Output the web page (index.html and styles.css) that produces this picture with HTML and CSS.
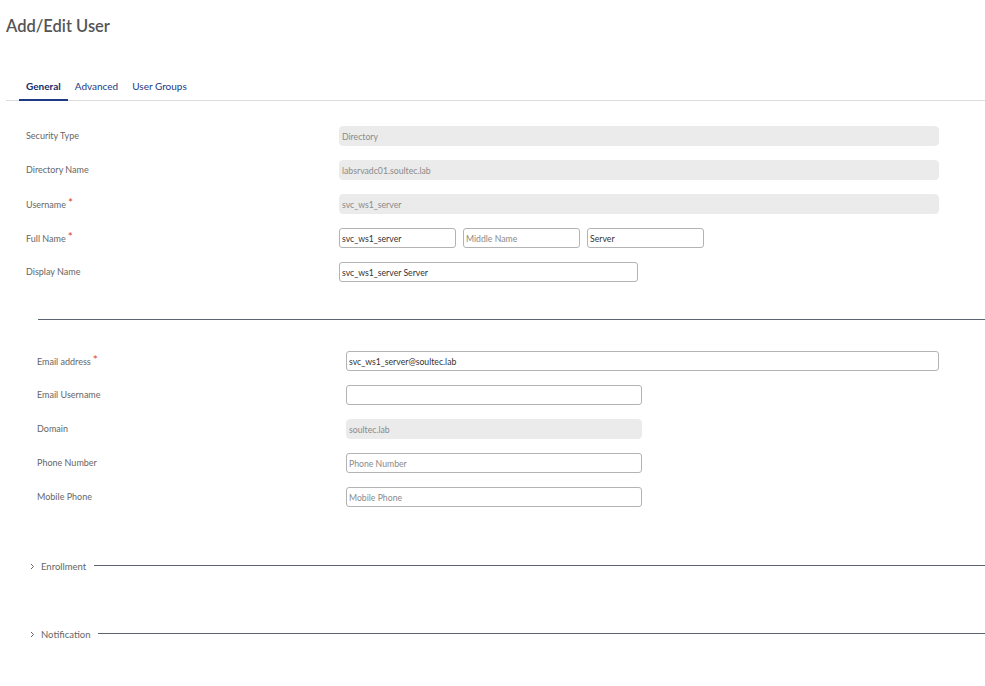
FILE: index.html
```html
<!DOCTYPE html>
<html lang="en">
<head>
    <meta charset="UTF-8">
    <title>Add/Edit User</title>
    <link rel="stylesheet" href="styles.css">
</head>
<body>
    <h1 class="titulo">Add/Edit User</h1>

    <!-- abas -->
    <div class="abas">
        <span class="aba ativa">General</span>
        <span class="aba">Advanced</span>
        <span class="aba">User Groups</span>
    </div>

    <!-- dados principais -->
    <div class="secao">
        <div class="linha">
            <label class="rotulo">Security Type</label>
            <input class="campo bloqueado largo" value="Directory" disabled>
        </div>
        <div class="linha">
            <label class="rotulo">Directory Name</label>
            <input class="campo bloqueado largo" value="labsrvadc01.soultec.lab" disabled>
        </div>
        <div class="linha">
            <label class="rotulo">Username<span class="obrigatorio">*</span></label>
            <input class="campo bloqueado largo" value="svc_ws1_server" disabled>
        </div>
        <div class="linha">
            <label class="rotulo">Full Name<span class="obrigatorio">*</span></label>
            <div class="nomes">
                <input class="campo nome" value="svc_ws1_server">
                <input class="campo nome" placeholder="Middle Name">
                <input class="campo nome" value="Server">
            </div>
        </div>
        <div class="linha">
            <label class="rotulo">Display Name</label>
            <input class="campo medio" value="svc_ws1_server Server">
        </div>
    </div>

    <hr class="divisor">

    <!-- contato -->
    <div class="secao contato">
        <div class="linha">
            <label class="rotulo">Email address<span class="obrigatorio">*</span></label>
            <input class="campo email" value="svc_ws1_server@soultec.lab">
        </div>
        <div class="linha">
            <label class="rotulo">Email Username</label>
            <input class="campo curto">
        </div>
        <div class="linha">
            <label class="rotulo">Domain</label>
            <input class="campo bloqueado curto" value="soultec.lab" disabled>
        </div>
        <div class="linha">
            <label class="rotulo">Phone Number</label>
            <input class="campo curto" placeholder="Phone Number">
        </div>
        <div class="linha">
            <label class="rotulo">Mobile Phone</label>
            <input class="campo curto" placeholder="Mobile Phone">
        </div>
    </div>

    <!-- grupos recolhidos -->
    <div class="grupo primeiro">
        <svg class="seta" width="5" height="7" viewBox="0 0 5 7"><polyline points="1,1 3.5,3.5 1,6" fill="none" stroke="#666" stroke-width="1"/></svg>
        <span class="grupo-nome">Enrollment</span>
        <span class="grupo-linha"></span>
    </div>
    <div class="grupo">
        <svg class="seta" width="5" height="7" viewBox="0 0 5 7"><polyline points="1,1 3.5,3.5 1,6" fill="none" stroke="#666" stroke-width="1"/></svg>
        <span class="grupo-nome">Notification</span>
        <span class="grupo-linha"></span>
    </div>
</body>
</html>
```

FILE: styles.css
```css
*{
    margin: 0;
    padding: 0;
    box-sizing: border-box;
}
body{
    font-family: Lato, "Open Sans", sans-serif;
    background-color: white;
    color: #666;
}
.titulo{
    font-size: 16.5px;
    font-weight: 600;
    line-height: 20px;
    color: #555;
    padding: 16px 0 0 6px;
}
/* abas */
.abas{
    display: flex;
    margin: 44px 0 0 6px;
    border-bottom: 1px solid #ddd;
}
.aba{
    font-size: 10px;
    line-height: 12px;
    color: #1d3a84;
    padding: 0 7px 7px;
    margin-bottom: -1px;
    border-bottom: 2px solid transparent;
}
.aba:first-child{
    margin-left: 13px;
}
.aba.ativa{
    font-weight: bold;
    color: #132c6e;
    border-bottom-color: #1d3a84;
}
/* linhas do formulario */
.secao{
    padding: 25px 0 0 26px;
}
.linha{
    display: flex;
    align-items: center;
    height: 20px;
    margin-bottom: 14px;
}
.linha:last-child{
    margin-bottom: 0;
}
.rotulo{
    width: 313px;
    font-size: 9px;
    color: #666;
    margin-top: -2px;
}
.obrigatorio{
    color: #e0452c;
    font-size: 12px;
    position: relative;
    top: -1px;
    margin-left: 2px;
}
.campo{
    height: 20px;
    font-family: Lato, "Open Sans", sans-serif;
    font-size: 8.7px;
    color: #333;
    background: white;
    border: 1px solid #b3b3b3;
    border-radius: 3px;
    padding: 0 2px;
    outline: none;
}
.campo::placeholder{
    color: #8a8a8a;
}
.bloqueado{
    background-color: #ebebeb;
    border-color: #ebebeb;
    border-radius: 4px;
    color: #8a8a8a;
}
.largo{
    width: 600px;
}
.nomes{
    display: flex;
    gap: 7px;
}
.nome{
    width: 117px;
}
.medio{
    width: 299px;
}
.divisor{
    border: none;
    border-top: 1px solid #5b6270;
    margin: 37px 0 0 38px;
}
.contato{
    padding: 31px 0 0 37px;
}
.contato .rotulo{
    width: 309px;
}
.email{
    width: 593px;
}
.curto{
    width: 296px;
}
/* secoes recolhidas */
.grupo{
    display: flex;
    align-items: center;
    height: 16px;
    margin-top: 52px;
    padding-left: 30px;
}
.grupo.primeiro{
    margin-top: 51px;
}
.seta{
    margin-right: 6px;
}
.grupo-nome{
    font-size: 9.5px;
    color: #666;
    margin-right: 8px;
}
.grupo-linha{
    flex: 1;
    border-top: 1px solid #5b6270;
    margin-top: -1px;
}
```
